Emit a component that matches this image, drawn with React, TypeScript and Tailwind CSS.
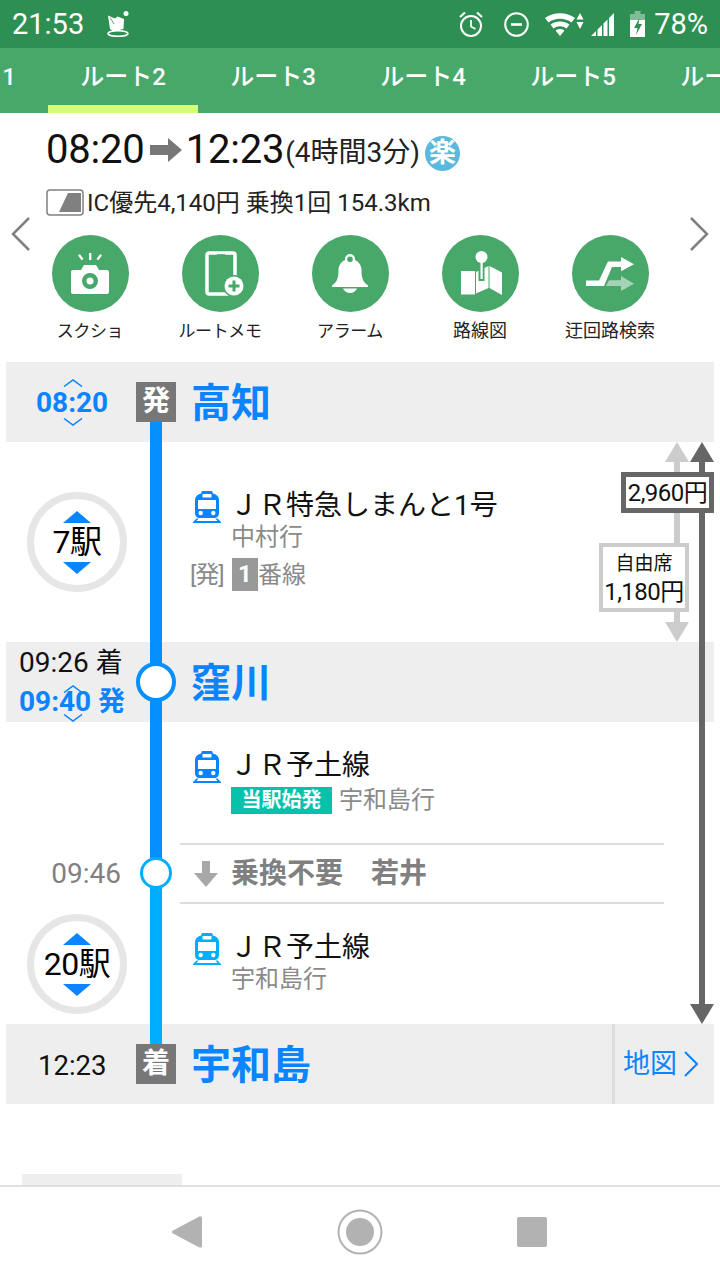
import type { ReactNode } from 'react'

const BLUE = '#0a84ff'

function AlarmIcon() {
  return (
    <svg width="24" height="26" viewBox="0 0 24 26" fill="none" stroke="white" strokeWidth="2">
      <circle cx="12" cy="15" r="10" />
      <path d="M12 9v6.500l4.500 2.500" strokeWidth="1.800" />
      <path d="M1 6 6 1.500M23 6l-5-4.500" strokeWidth="2.200" />
    </svg>
  )
}

function DndIcon() {
  return (
    <svg width="25" height="25" viewBox="0 0 25 25" fill="none" stroke="white" strokeWidth="2">
      <circle cx="12.500" cy="12.500" r="11.300" />
      <path d="M7 12.500h11" strokeWidth="2.600" />
    </svg>
  )
}

function WifiIcon() {
  return (
    <svg width="39" height="23" viewBox="0 0 39 23" fill="white">
      <path d="M0 5C8-1.500 22-1.500 30 5l-3.500 4.500C20 4.500 10 4.500 3.500 9.500z" />
      <path d="M5.500 11.500c5.500-4 13.500-4 19 0l-3 4c-4-3-9-3-13 0z" />
      <path d="M10.500 17.500c2.500-2 6.500-2 9 0L15 23z" />
      <path d="M35 0l3.500 6.500h-7zM35 16l-3.500-7h7z" />
    </svg>
  )
}

function SignalIcon() {
  return (
    <svg width="23" height="23" viewBox="0 0 23 23" fill="white">
      <path d="M0 23 5 18v5zM6.500 23V16.500L11 12v11zM12.500 23V10.500L16.500 6.500V23zM18 23V5L23 0v23z" />
    </svg>
  )
}

function BatteryIcon() {
  return (
    <svg width="15" height="26" viewBox="0 0 15 26">
      <path d="M4.500 0h6v3H15v6H0V3h4.500z" fill="white" fillOpacity="0.4" />
      <path d="M0 9h15v17H0z" fill="white" />
      <path d="M9.500 7 4 17h3.500L6 24l6-11H8.500z" fill="#2e8f53" />
    </svg>
  )
}

function NotificationIcon() {
  return (
    <svg width="22" height="26" viewBox="0 0 22 26">
      <path d="M1 4.500 8 7.500 10.500 5.500 17 8l-.5 10L6.500 20.500 3 18z" fill="white" />
      <path d="M3 6.500 7 13" stroke="#2e8f53" strokeWidth="0.800" />
      <circle cx="19" cy="2.500" r="2.500" fill="white" />
      <ellipse cx="11" cy="22.500" rx="10" ry="2.800" fill="none" stroke="white" strokeWidth="1.500" />
    </svg>
  )
}

function StatusBar() {
  return (
    <div className="h-12 bg-[#2e8f53] flex items-center text-white shrink-0">
      <span className="ml-3 text-[29px] leading-none">21:53</span>
      <span className="ml-[23px] flex"><NotificationIcon /></span>
      <div className="ml-auto flex items-center">
        <AlarmIcon />
        <span className="ml-[21px] flex"><DndIcon /></span>
        <span className="ml-4 flex"><WifiIcon /></span>
        <span className="ml-[7px] flex"><SignalIcon /></span>
        <span className="ml-4 flex"><BatteryIcon /></span>
        <span className="ml-[9px] mr-3 text-[29px] leading-none">78%</span>
      </div>
    </div>
  )
}

function RouteTabs() {
  const tabs = [1, 2, 3, 4, 5, 6]
  return (
    <div className="h-[65px] bg-[#48a86a] flex ml-[-102px] w-[1000px] shrink-0">
      {tabs.map((n) => (
        <div
          key={n}
          className={`w-[150px] h-full flex justify-center pt-[13px] text-white text-[24px] font-medium leading-[32px] border-b-8 ${
            n === 2 ? 'border-[#d4ff7a]' : 'border-transparent'
          }`}
        >
          ルート{n}
        </div>
      ))}
    </div>
  )
}

function ArrowRight() {
  return (
    <svg width="32" height="24" viewBox="0 0 32 24" fill="#777">
      <path d="M0 7h18V0l14 12-14 12v-7H0z" />
    </svg>
  )
}

function CameraGlyph() {
  return (
    <svg width="38" height="41" viewBox="0 0 38 41" fill="white">
      <path d="M18 0h2.400v7H18zM7 2.500l1.800-1.400 3.700 4.800-1.800 1.400zM31 2.500l-1.800-1.400-3.700 4.800 1.800 1.400z" />
      <path
        fillRule="evenodd"
        d="M2 17h8l3-5h12l3 5h8a2 2 0 0 1 2 2v20a2 2 0 0 1-2 2H2a2 2 0 0 1-2-2V19a2 2 0 0 1 2-2zm17 3a8 8 0 1 0 0 16 8 8 0 0 0 0-16zm0 4.500a3.500 3.500 0 1 1 0 7 3.500 3.500 0 0 1 0-7z"
      />
    </svg>
  )
}

function MemoGlyph() {
  return (
    <svg width="40" height="46" viewBox="0 0 40 46" className="ml-[9px]">
      <rect x="2" y="2" width="28" height="41" rx="2" fill="none" stroke="white" strokeWidth="3.500" />
      <path d="M12 3.200h8v1.300h-8z" fill="#48a86a" />
      <circle cx="29" cy="35" r="11" fill="#48a86a" />
      <circle cx="29" cy="35" r="9.500" fill="white" />
      <path d="M27.500 29.500h3v4h4v3h-4v4h-3v-4h-4v-3h4z" fill="#48a86a" />
    </svg>
  )
}

function BellGlyph() {
  return (
    <svg width="36" height="39" viewBox="0 0 36 39" fill="white">
      <path
        fillRule="evenodd"
        d="M18 0a5 5 0 0 1 5 5v1c4 2 6.500 5.500 6.500 10 0 7 1 12 6.500 15.500V33H0v-1.500C5.500 28 6.500 23 6.500 16c0-4.500 2.500-8 6.500-10V5a5 5 0 0 1 5-5zm0 2.500a2.800 2.800 0 1 0 0 5.600 2.800 2.800 0 0 0 0-5.600z"
      />
      <path d="M11 34.500h14c-1 2.500-4 4.500-7 4.500s-6-2-7-4.500z" />
    </svg>
  )
}

function MapGlyph() {
  return (
    <svg width="41" height="44" viewBox="0 0 41 44" fill="white" className="ml-[3px] -mt-[2px]">
      <path d="M0 20h14v23.500H0z" />
      <path d="M15 21 27.500 15v22L15 42.500z" />
      <path d="M28.500 15 41 21.500V44l-12.500-7z" />
      <path d="M17.500 16h6v14h-6z" fill="#48a86a" />
      <circle cx="20.500" cy="6" r="6" />
      <path d="M19.500 10h2.200v18h-2.200z" />
    </svg>
  )
}

function DetourGlyph() {
  return (
    <svg width="48" height="34" viewBox="0 0 48 34" fill="white">
      <path d="M0 23.500h13L22 4.500h13V0l13 7.300-13 7V10h-9l-8 19H0z" />
      <path d="M23 23.300h12V19l13 7.700L35 34v-5H20z" fillOpacity="0.5" />
    </svg>
  )
}

const actions: { label: string; kana: boolean; glyph: ReactNode }[] = [
  { label: 'スクショ', kana: true, glyph: <CameraGlyph /> },
  { label: 'ルートメモ', kana: true, glyph: <MemoGlyph /> },
  { label: 'アラーム', kana: true, glyph: <BellGlyph /> },
  { label: '路線図', kana: false, glyph: <MapGlyph /> },
  { label: '迂回路検索', kana: false, glyph: <DetourGlyph /> },
]

function Chevron({ dir, color = '#808080' }: { dir: 'left' | 'right'; color?: string }) {
  return (
    <svg width="20" height="36" viewBox="0 0 20 36" fill="none" stroke={color} strokeWidth="2.500">
      <path d={dir === 'left' ? 'M18 2 2 18l16 16' : 'M2 2l16 16L2 34'} />
    </svg>
  )
}

function Summary() {
  return (
    <div className="relative h-[249px] shrink-0">
      <div className="flex items-center h-[74px] pl-[46px]">
        <span className="text-[40px] leading-none text-[#111] tracking-[-0.2px]">08:20</span>
        <span className="ml-[5px] flex"><ArrowRight /></span>
        <span className="ml-[4px] text-[40px] leading-none text-[#111] tracking-[-0.2px]">12:23</span>
        <span className="ml-[1px] mt-[6px] text-[28px] leading-none text-[#222]">(4時間3分)</span>
        <span className="ml-[5px] mt-[6px] w-[35px] h-[35px] rounded-full bg-[#5bb9dd] text-white text-[27px] leading-[35px] text-center font-bold">
          楽
        </span>
      </div>
      <div className="flex items-center h-[30px] pl-[46px]">
        <svg width="38" height="27" viewBox="0 0 38 27" className="shrink-0">
          <rect x="1" y="1" width="36" height="25" rx="3" fill="white" stroke="#808080" strokeWidth="1.500" />
          <path d="M13 23 22 4h13v19z" fill="#808080" />
        </svg>
        <span className="ml-[3px] mt-[2px] text-[24px] leading-none text-[#222]">IC優先4,140円 乗換1回 154.3km</span>
      </div>
      <div className="grid grid-cols-[repeat(5,130px)] ml-[25px] mt-[18px]">
        {actions.map((a) => (
          <div key={a.label} className="flex flex-col items-center">
            <div className="w-[77px] h-[77px] rounded-full bg-[#48a86a] flex items-center justify-center">{a.glyph}</div>
            <span className={`mt-[8px] leading-[22px] text-[#222] ${a.kana ? 'text-[17px] tracking-[-0.4px]' : 'text-[18px]'}`}>
              {a.label}
            </span>
          </div>
        ))}
      </div>
      <span className="absolute left-[11px] top-[103px] flex"><Chevron dir="left" /></span>
      <span className="absolute left-[689px] top-[103px] flex"><Chevron dir="right" /></span>
    </div>
  )
}

function Badge({ label }: { label: string }) {
  return (
    <span className="relative z-10 w-10 h-10 bg-[#777] text-white font-bold text-[28px] leading-[40px] text-center">{label}</span>
  )
}

function Caret({ up, className }: { up: boolean; className: string }) {
  return (
    <svg width="20" height="8" viewBox="0 0 20 8" fill="none" stroke={BLUE} strokeWidth="1.500" className={className}>
      <path d={up ? 'M1 7.500 10 1l9 6.500' : 'M1 .5 10 7l9-6.500'} />
    </svg>
  )
}

function StationRow({ name, time, marker, right }: { name: string; time: ReactNode; marker: ReactNode; right?: ReactNode }) {
  return (
    <div className="relative h-20 mx-[6px] bg-[#eeeeee] flex items-center">
      <div className="relative w-[130px] h-full shrink-0">{time}</div>
      {marker}
      <span className="ml-4 mt-[3px] -translate-x-px text-[40px] leading-none font-bold text-[#0a84ff]">{name}</span>
      {right}
    </div>
  )
}

function TrainIcon({ color }: { color: string }) {
  return (
    <svg width="28" height="32" viewBox="0 0 28 32" className="shrink-0">
      <path
        fillRule="evenodd"
        fill={color}
        d="M9 0h10l1 2.500C24 3.500 26 6 26 9v13c0 3-2 5-5 5H7c-3 0-5-2-5-5V9c0-3 2-5.500 6-6.500zM9.500 3v3.500h9V3zM5 9v9h18V9zM5.500 22a2.200 2.200 0 1 0 4.400 0 2.200 2.200 0 0 0-4.400 0zm12.600 0a2.200 2.200 0 1 0 4.400 0 2.200 2.200 0 0 0-4.400 0z"
      />
      <path d="M0 32h28v-1l-3.500-3.500h-2l2 2.500h-21l2-2.500h-2L0 31z" fill={color} />
    </svg>
  )
}

function StopCount({ count }: { count: string }) {
  return (
    <div className="relative w-[100px] h-[100px] rounded-full border-[7px] border-[#e6e6e6] flex items-center justify-center text-[32px] text-black leading-none tracking-[-0.5px]">
      {count}
      <svg width="28" height="12" viewBox="0 0 28 12" className="absolute top-[12px]" fill={BLUE}><path d="M14 0 28 12H0z" /></svg>
      <svg width="28" height="12" viewBox="0 0 28 12" className="absolute bottom-[11px]" fill={BLUE}><path d="M14 12 28 0H0z" /></svg>
    </div>
  )
}

function TrainLine({ name, color, children }: { name: string; color: string; children: ReactNode }) {
  return (
    <div className="flex flex-col">
      <div className="flex items-center h-[32px] ml-[1px]">
        <TrainIcon color={color} />
        <span className="ml-[9px] -mt-[2px] text-[28px] leading-none text-[#111] whitespace-nowrap">{name}</span>
      </div>
      {children}
    </div>
  )
}

function FareRail({ color, height, className }: { color: string; height: number; className: string }) {
  return (
    <div className={`absolute flex flex-col items-center ${className}`} style={{ height }}>
      <svg width="24" height="20" viewBox="0 0 24 20" fill={color} className="shrink-0"><path d="M12 0 24 20H0z" /></svg>
      <div className="w-[6px] flex-1" style={{ backgroundColor: color }} />
      <svg width="24" height="20" viewBox="0 0 24 20" fill={color} className="shrink-0"><path d="M12 20 24 0H0z" /></svg>
    </div>
  )
}

function RouteDetail() {
  return (
    <div className="relative">
      <StationRow
        name="高知"
        marker={<Badge label="発" />}
        time={
          <div className="h-full flex items-center pl-[30px] pt-[2px]">
            <span className="text-[28px] font-bold leading-none text-[#0a84ff]">08:20</span>
            <Caret up className="absolute left-[57px] top-[17px]" />
            <Caret up={false} className="absolute left-[57px] top-[56px]" />
          </div>
        }
      />

      <div className="relative h-[200px] flex">
        <div className="ml-[27px] mt-[50px]"><StopCount count="7駅" /></div>
        <div className="ml-[65px] pt-[49px]">
          <TrainLine name="ＪＲ特急しまんと1号" color={BLUE}>
            <span className="ml-[39px] -mt-[1px] text-[24px] leading-[30px] text-[#8a8a8a]">中村行</span>
            <div className="flex items-center h-[33px] mt-[6px] text-[24px] leading-none text-[#8a8a8a]">
              <span className="-ml-[2px] w-[42px] tracking-[-1px]">[発]</span>
              <span className="w-[26px] h-[33px] bg-[#999] text-white font-bold text-[24px] leading-[33px] text-center">1</span>
              <span>番線</span>
            </div>
          </TrainLine>
        </div>
      </div>

      <StationRow
        name="窪川"
        marker={<span className="relative z-10 w-10 h-10 rounded-full bg-white border-4 border-[#068fff]" />}
        time={
          <div className="h-full flex flex-col pl-[13px] pt-[7px] leading-none whitespace-nowrap">
            <span className="h-[39px] leading-[28px] text-[#111] text-[28px]">09:26 <span className="text-[27px]">着</span></span>
            <span className="font-bold text-[#0a84ff] leading-[28px] text-[28px]">09:40 <span className="text-[27px]">発</span></span>
            <Caret up className="absolute left-[57px] top-[43px]" />
            <Caret up={false} className="absolute left-[57px] top-[72px]" />
          </div>
        }
      />

      <div className="relative h-[302px]">
        <div className="h-[121px] pl-[192px] pt-[29px]">
          <TrainLine name="ＪＲ予土線" color={BLUE}>
            <div className="flex items-center mt-[4px]">
              <span className="ml-[39px] w-[101px] h-[27px] bg-[#08c1ab] text-white font-bold text-[20px] leading-[27px] text-center">当駅始発</span>
              <span className="ml-[7px] -mt-[2px] text-[24px] leading-none text-[#8a8a8a]">宇和島行</span>
            </div>
          </TrainLine>
        </div>
        <div className="relative h-[61px] ml-[180px] w-[484px] border-y-2 border-[#dddddd] flex items-center">
          <svg width="24" height="26" viewBox="0 0 24 26" fill="#a8a8a8" className="ml-[14px]"><path d="M8 0h8v12h8L12 26 0 12h8z" /></svg>
          <span className="ml-[13px] text-[28px] leading-none font-bold text-[#808080] whitespace-pre">乗換不要　若井</span>
          <span className="absolute right-[543px] text-[28px] leading-none text-[#808080]">09:46</span>
          <span className="absolute left-[-40px] top-[12px] z-10 w-8 h-8 rounded-full bg-white border-[3px] border-[#00aeff]" />
        </div>
        <div className="relative pl-[192px] pt-[29px]">
          <TrainLine name="ＪＲ予土線" color="#00aeff">
            <span className="ml-[39px] -mt-[1px] text-[24px] leading-[30px] text-[#8a8a8a]">宇和島行</span>
          </TrainLine>
          <div className="absolute left-[27px] top-[10px]"><StopCount count="20駅" /></div>
        </div>
      </div>

      <StationRow
        name="宇和島"
        marker={<Badge label="着" />}
        time={
          <div className="h-full flex items-center pl-[32px] pt-[3px]">
            <span className="text-[27.500px] leading-none text-[#111]">12:23</span>
          </div>
        }
        right={
          <div className="ml-auto h-full w-[102px] border-l-[3px] border-[#dddddd] flex items-center pl-[8px] text-[#0a84ff] text-[27px] leading-none">
            地図
            <span className="ml-[7px] flex"><svg width="14" height="26" viewBox="0 0 14 26" fill="none" stroke={BLUE} strokeWidth="2"><path d="m1 1 12 12L1 25" /></svg></span>
          </div>
        }
      />

      {/* timeline spine runs from the first badge down to the last one */}
      <div className="absolute left-[150px] top-[60px] w-3 h-[451px] bg-[#068fff]" />
      <div className="absolute left-[150px] top-[511px] w-3 h-[171px] bg-[#00aeff]" />

      {/* fare brackets on the right edge */}
      <FareRail color="#cccccc" height={200} className="left-[665px] top-[80px]" />
      <FareRail color="#666666" height={582} className="left-[690px] top-[80px]" />
      <div className="absolute left-[621px] top-[110px] w-[93px] h-[41px] bg-white border-[5px] border-[#666] flex items-center justify-center text-[24px] leading-none text-[#111] tracking-[-0.5px]">
        2,960円
      </div>
      <div className="absolute left-[599px] top-[181px] w-[90px] h-[69px] bg-white border-[4px] border-[#cccccc] flex flex-col items-center justify-center pt-[2px] text-[#111]">
        <span className="text-[19px] leading-[26px]">自由席</span>
        <span className="text-[24px] leading-[30px] tracking-[-0.5px]">1,180円</span>
      </div>
    </div>
  )
}

function NavBar() {
  return (
    <div className="h-[95px] border-t-2 border-[#e0e0e0] flex items-center justify-center shrink-0 relative">
      <svg width="30" height="32" viewBox="0 0 30 32" fill="#b2b2b2" className="absolute left-[172px] top-[29px]"><path d="M27 .8c1.500-1 3-.2 3 1.500v27.400c0 1.700-1.500 2.500-3 1.500L1 17.500c-1.300-.8-1.300-2.200 0-3z" /></svg>
      <svg width="46" height="46" viewBox="0 0 46 46" className="absolute left-[337px] top-[22px]">
        <circle cx="23" cy="23" r="21.500" fill="none" stroke="#b2b2b2" strokeWidth="2" />
        <circle cx="23" cy="23" r="14" fill="#b2b2b2" />
      </svg>
      <div className="absolute left-[517px] top-[30px] w-[30px] h-[30px] rounded-[2px] bg-[#b2b2b2]" />
    </div>
  )
}

export default function App() {
  return (
    <div className="w-[720px] h-[1280px] overflow-hidden bg-white flex flex-col font-[family-name:Roboto,'Noto_Sans_CJK_JP',sans-serif]">
      <StatusBar />
      <RouteTabs />
      <Summary />
      <RouteDetail />
      <div className="flex-1 flex items-end pl-[22px]">
        <div className="w-[160px] h-[11px] bg-[#eeeeee]" />
      </div>
      <NavBar />
    </div>
  )
}
